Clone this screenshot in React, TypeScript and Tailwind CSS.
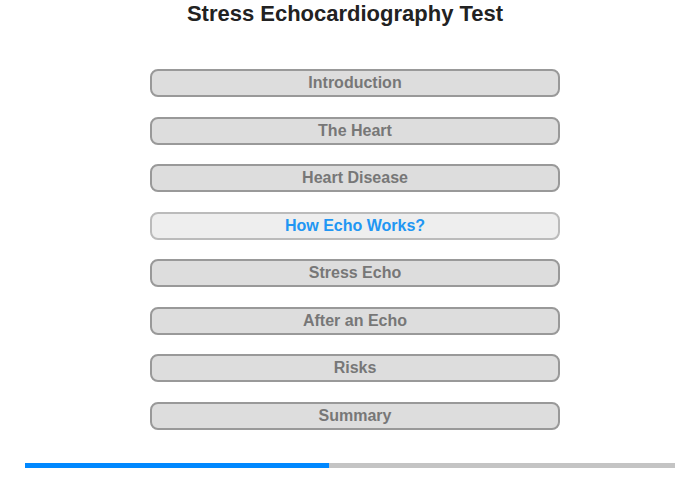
import React from 'react';

const items = [
    'Introduction',
    'The Heart',
    'Heart Disease',
    'How Echo Works?',
    'Stress Echo',
    'After an Echo',
    'Risks',
    'Summary',
];

const active = 3;

export default function App() {
    return (
        <div className="w-[700px] h-[480px] bg-white overflow-hidden" style={{ fontFamily: '"Liberation Sans", Arial, sans-serif' }}>
            <h1 className="text-center text-[22px] leading-[28px] font-bold text-[#222] pr-[10px]">
                Stress Echocardiography Test
            </h1>
            <div className="flex flex-col items-center gap-[19.5px] mt-[41px] pl-[10px]">
                {items.map((label, idx) => (
                    <button
                        key={label}
                        className={
                            idx === active
                                ? 'w-[410px] h-[28px] rounded-[8px] border-2 border-[#bbbbbb] bg-[#eeeeee] text-[#2196f3] text-[16px] font-bold leading-none'
                                : 'w-[410px] h-[28px] rounded-[8px] border-2 border-[#999999] bg-[#dddddd] text-[#777777] text-[16px] font-bold leading-none'
                        }
                    >
                        {label}
                    </button>
                ))}
            </div>
            <div className="flex mx-[25px] mt-[33px] h-[5px]">
                <div className="w-[304px] bg-[#0088ff]" />
                <div className="flex-1 bg-[#c4c4c4]" />
            </div>
        </div>
    );
}
